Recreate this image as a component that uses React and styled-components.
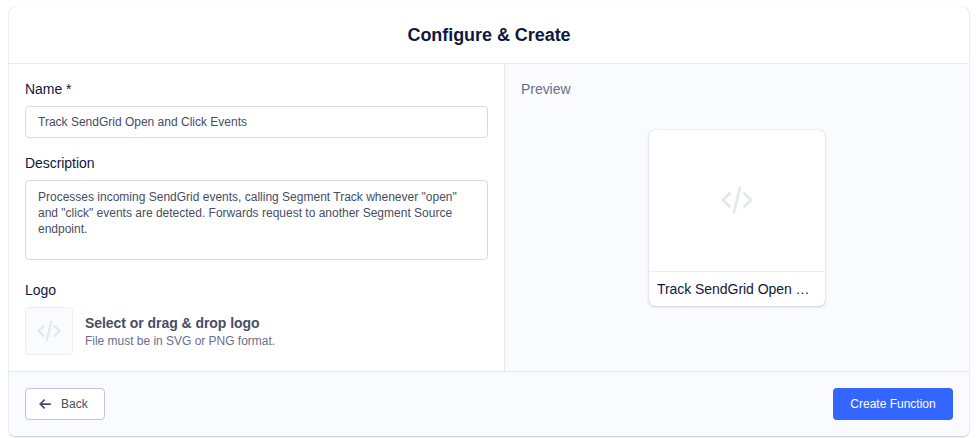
import React from "react";
import styled, { createGlobalStyle } from "styled-components";

const GlobalStyle = createGlobalStyle`
  html, body {
    margin: 0;
    padding: 0;
    background: #ffffff;
    font-family: "Liberation Sans", Arial, sans-serif;
  }
`;

function CodeIcon({ size }) {
  return (
    <svg width={size} height={size} viewBox="0 0 32 32" fill="none" stroke="#E6E8F0" strokeWidth="3" strokeLinecap="round" strokeLinejoin="round">
      <path d="M8.5 9.5L2 16l6.5 6.5" />
      <path d="M23.5 9.5L30 16l-6.5 6.5" />
      <path d="M19 4l-6 24" />
    </svg>
  );
}

function ArrowLeftIcon() {
  return (
    <svg width="14" height="14" viewBox="0 0 16 16" fill="none" stroke="#474D66" strokeWidth="2" strokeLinecap="round" strokeLinejoin="round">
      <path d="M14 8H2.5M7 3.5L2.5 8 7 12.5" />
    </svg>
  );
}

export default function App() {
  return (
    <>
      <GlobalStyle />
      <Page>
        <Card>
          <Header>Configure &amp; Create</Header>
          <Body>
            <Form>
              <Label>Name *</Label>
              <NameField>Track SendGrid Open and Click Events</NameField>
              <Label>Description</Label>
              <DescriptionField>
                Processes incoming SendGrid events, calling Segment Track whenever "open" and "click" events are detected. Forwards request to another Segment Source endpoint.
              </DescriptionField>
              <Label>Logo</Label>
              <LogoRow>
                <LogoBox>
                  <CodeIcon size={24} />
                </LogoBox>
                <div>
                  <LogoTitle>Select or drag &amp; drop logo</LogoTitle>
                  <LogoHint>File must be in SVG or PNG format.</LogoHint>
                </div>
              </LogoRow>
            </Form>
            <Preview>
              <PreviewTitle>Preview</PreviewTitle>
              <PreviewCard>
                <PreviewImage>
                  <CodeIcon size={32} />
                </PreviewImage>
                <PreviewName>Track SendGrid Open and Click Events</PreviewName>
              </PreviewCard>
            </Preview>
          </Body>
          <Footer>
            <BackButton>
              <ArrowLeftIcon />
              Back
            </BackButton>
            <CreateButton>Create Function</CreateButton>
          </Footer>
        </Card>
      </Page>
    </>
  );
}

const Page = styled.div`
  width: 977px;
  height: 438px;
  padding: 7px 8px 2px 9px;
  box-sizing: border-box;
  overflow: hidden;
`;

const Card = styled.div`
  display: flex;
  flex-direction: column;
  height: 429px;
  background: #ffffff;
  border-radius: 6px;
  box-shadow: 0 0 1px rgba(67, 90, 111, 0.3), 0 1px 2px rgba(67, 90, 111, 0.3);
`;

const Header = styled.div`
  height: 56px;
  line-height: 56px;
  flex-shrink: 0;
  border-bottom: 1px solid #e6e8f0;
  text-align: center;
  font-size: 18px;
  font-weight: 700;
  letter-spacing: -0.05px;
  color: #101840;
`;

const Body = styled.div`
  display: flex;
  flex: 1;
  min-height: 0;
`;

const Form = styled.div`
  width: 496px;
  box-sizing: border-box;
  padding: 15px 16px 0;
  border-right: 1px solid #e6e8f0;
`;

const Label = styled.div`
  font-size: 14px;
  line-height: 20px;
  letter-spacing: -0.05px;
  color: #101840;
  margin-bottom: 7px;
`;

const NameField = styled.div`
  height: 32px;
  line-height: 30px;
  box-sizing: border-box;
  border: 1px solid #d8dae5;
  border-radius: 4px;
  padding: 0 12px;
  margin-bottom: 15px;
  font-size: 12px;
  color: #474d66;
`;

const DescriptionField = styled.div`
  height: 80px;
  box-sizing: border-box;
  border: 1px solid #d8dae5;
  border-radius: 4px;
  padding: 8px 12px;
  margin-bottom: 20px;
  font-size: 12px;
  line-height: 16px;
  color: #474d66;
`;

const LogoRow = styled.div`
  display: flex;
  align-items: center;
  gap: 12px;
`;

const LogoBox = styled.div`
  width: 48px;
  height: 48px;
  box-sizing: border-box;
  display: flex;
  align-items: center;
  justify-content: center;
  background: #fafbff;
  border: 1px solid #edeff5;
  border-radius: 4px;
`;

const LogoTitle = styled.div`
  font-size: 14px;
  font-weight: 700;
  line-height: 20px;
  letter-spacing: -0.05px;
  color: #474d66;
`;

const LogoHint = styled.div`
  font-size: 12px;
  line-height: 16px;
  letter-spacing: -0.02px;
  color: #696f8c;
`;

const Preview = styled.div`
  flex: 1;
  display: flex;
  flex-direction: column;
  align-items: center;
  padding: 15px 16px 16px;
  background: #fafbff;
`;

const PreviewTitle = styled.div`
  align-self: flex-start;
  font-size: 14px;
  line-height: 20px;
  letter-spacing: -0.05px;
  color: #696f8c;
  margin-bottom: 31px;
`;

const PreviewCard = styled.div`
  width: 176px;
  background: #ffffff;
  border-radius: 6px;
  box-shadow: 0 0 1px rgba(67, 90, 111, 0.3), 0 1px 3px rgba(67, 90, 111, 0.25);
`;

const PreviewImage = styled.div`
  height: 141px;
  box-sizing: content-box;
  display: flex;
  align-items: center;
  justify-content: center;
  padding-bottom: 0;
  border-bottom: 1px solid #edeff5;

  svg {
    margin-bottom: 2px;
  }
`;

const PreviewName = styled.div`
  padding: 8px;
  font-size: 14px;
  line-height: 18px;
  letter-spacing: -0.05px;
  color: #101840;
  white-space: nowrap;
  overflow: hidden;
  text-overflow: ellipsis;
`;

const Footer = styled.div`
  height: 65px;
  box-sizing: border-box;
  flex-shrink: 0;
  display: flex;
  align-items: center;
  justify-content: space-between;
  padding: 0 16px;
  background: #fafbff;
  border-top: 1px solid #e6e8f0;
  border-radius: 0 0 6px 6px;
`;

const BackButton = styled.div`
  display: flex;
  align-items: center;
  gap: 9px;
  width: 80px;
  height: 32px;
  box-sizing: border-box;
  padding-left: 12px;
  background: #ffffff;
  border: 1px solid #c1c4d6;
  border-radius: 4px;
  font-size: 12px;
  color: #474d66;
`;

const CreateButton = styled.div`
  display: flex;
  align-items: center;
  justify-content: center;
  width: 120px;
  height: 32px;
  background: #3366ff;
  border-radius: 4px;
  font-size: 12px;
  color: #ffffff;
`;
